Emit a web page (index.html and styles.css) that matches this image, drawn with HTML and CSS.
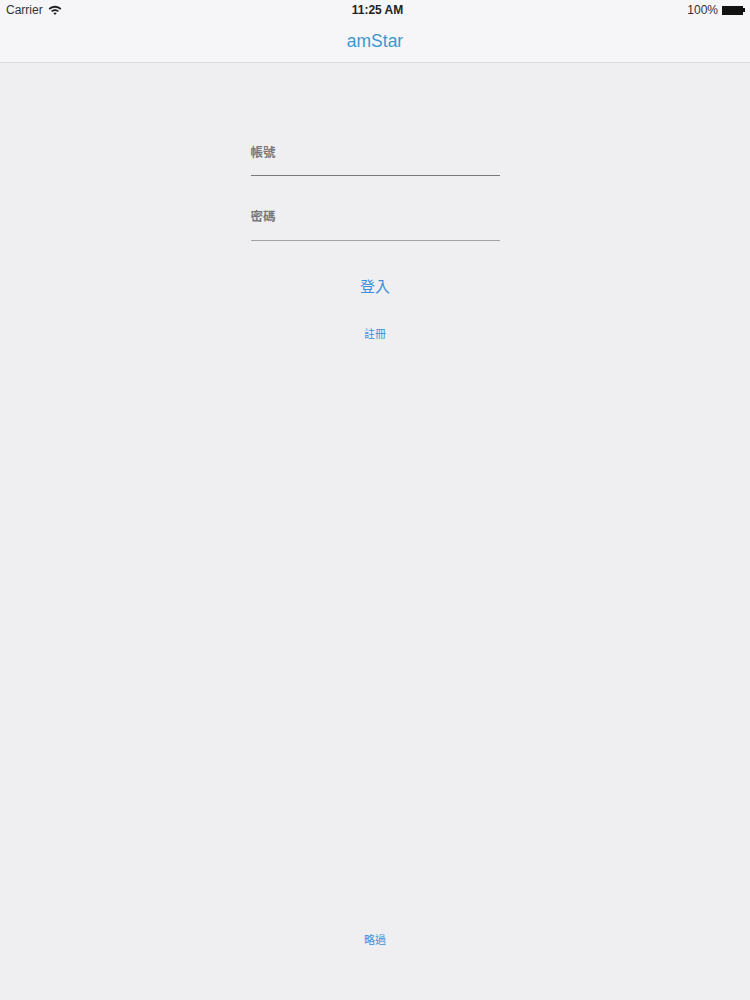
FILE: index.html
```html
<!DOCTYPE html>
<html lang="zh-Hant">
<head>
    <meta charset="UTF-8">
    <meta name="viewport" content="width=device-width, initial-scale=1.0">
    <title>amStar</title>
    <link rel="stylesheet" href="styles.css">
</head>
<body>
    <div class="container">
        <header class="top-bar">
            <div class="status-bar">
                <div class="status-left">
                    <span>Carrier</span>
                    <svg class="wifi" width="14" height="10" viewBox="0 0 14 10">
                        <path d="M0.6 3.4C4.2 0 9.8 0 13.4 3.4L12.2 4.7C9.2 2 4.8 2 1.8 4.7Z" fill="#222"/>
                        <path d="M3 5.8C5.3 3.7 8.7 3.7 11 5.8L9.8 7C8.1 5.6 5.9 5.6 4.2 7Z" fill="#222"/>
                        <path d="M5.3 8.1C6.3 7.3 7.7 7.3 8.7 8.1L7 9.9Z" fill="#222"/>
                    </svg>
                </div>
                <div class="status-time">11:25 AM</div>
                <div class="status-right">
                    <span>100%</span>
                    <div class="battery"></div>
                    <div class="battery-tip"></div>
                </div>
            </div>
            <div class="nav-title">amStar</div>
        </header>

        <main class="login">
            <div class="field">帳號</div>
            <div class="field">密碼</div>
            <a class="login-link">登入</a>
            <a class="register-link">註冊</a>
        </main>

        <footer class="skip">
            <a class="skip-link">略過</a>
        </footer>
    </div>
</body>
</html>
```

FILE: styles.css
```css
* {
    margin: 0;
    padding: 0;
    box-sizing: border-box;
}

body {
    font-family: "Liberation Sans", "Noto Sans CJK TC", sans-serif;
    background-color: #efeff1;
    overflow: hidden;
}

.container {
    display: flex;
    flex-direction: column;
    height: 1000px;
}

.top-bar {
    height: 63px;
    background-color: #f6f5f8;
    border-bottom: 1px solid #d9d9db;
}

.status-bar {
    display: grid;
    grid-template-columns: 1fr auto 1fr;
    align-items: center;
    height: 20px;
    padding: 0 5px 0 6px;
    font-size: 12px;
    color: #333;
}

.status-left {
    display: flex;
    align-items: center;
    gap: 5px;
}

.status-time {
    margin-left: 4px;
    font-weight: bold;
    color: #222;
}

.status-right {
    display: flex;
    align-items: center;
    justify-content: flex-end;
}

.status-right span {
    margin-right: 4px;
}

.battery {
    width: 21px;
    height: 9px;
    background-color: #111;
}

.battery-tip {
    width: 2px;
    height: 4px;
    background-color: #111;
}

.nav-title {
    margin-top: 11px;
    text-align: center;
    font-size: 17.5px;
    line-height: 20px;
    color: #3d97cf;
}

.login {
    flex: 1;
    display: flex;
    flex-direction: column;
    align-items: center;
    padding-top: 64px;
}

.field {
    width: 249px;
    height: 49px;
    padding-top: 18px;
    margin-bottom: 15px;
    font-size: 12.5px;
    font-weight: bold;
    line-height: 16px;
    color: #75787c;
    border-bottom: 1px solid #77797c;
}

.field + .field {
    height: 50px;
    margin-bottom: 14px;
    border-bottom-color: #a3a3a6;
}

.login-link {
    margin-top: 22px;
    font-size: 15px;
    line-height: 20px;
    color: #3b8fdc;
}

.register-link {
    margin-top: 30px;
    font-size: 11px;
    line-height: 14px;
    color: #3b8fdc;
}

.skip {
    padding-bottom: 53px;
    text-align: center;
}

.skip-link {
    display: block;
    font-size: 11px;
    line-height: 14px;
    color: #3b8fdc;
}
```
